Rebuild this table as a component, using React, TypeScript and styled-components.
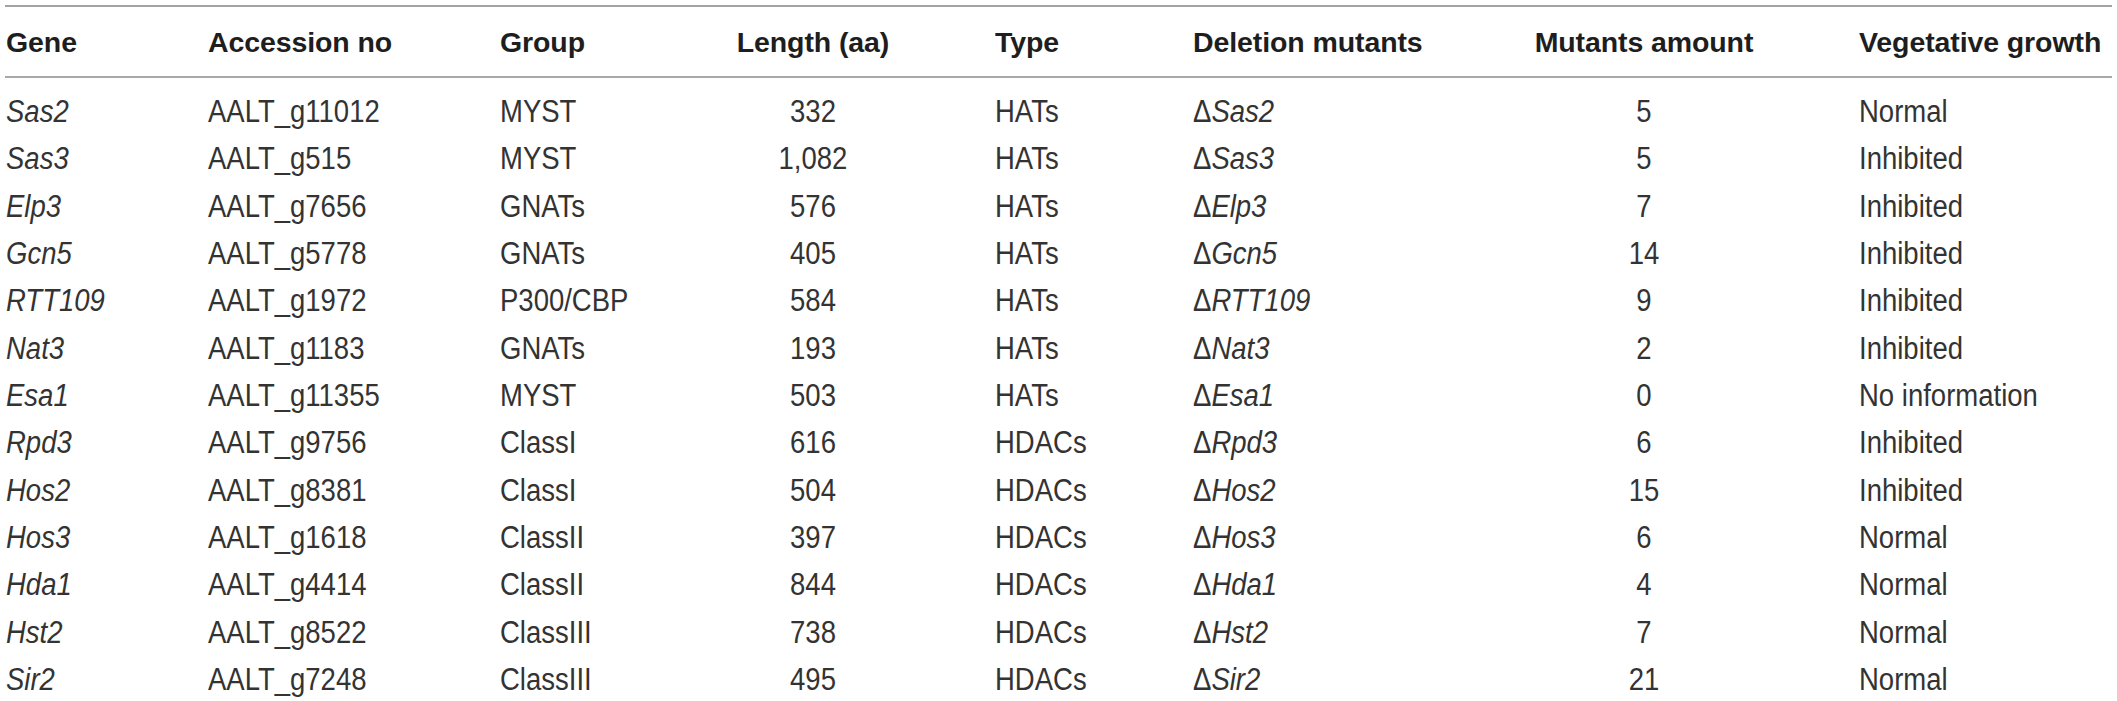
import React from "react";
import styled, { createGlobalStyle } from "styled-components";

const GlobalStyle = createGlobalStyle`
  html, body {
    margin: 0;
    padding: 0;
    background: #ffffff;
  }
  body {
    font-family: "Liberation Sans", Arial, Helvetica, sans-serif;
  }
`;

const Page = styled.div`
  padding: 5px 5px 0 5px;
  background: #ffffff;
`;

const Table = styled.table`
  width: 2107px;
  border-collapse: collapse;
  table-layout: fixed;
  border-top: 2px solid #a3a3a3;
`;

const HeadRow = styled.tr`
  border-bottom: 2px solid #a8a8a8;
`;

type Align = { $center?: boolean };

const HeadCell = styled.th<Align>`
  height: 69px;
  padding: 0 0 0 ${(p) => (p.$center ? "0" : "1px")};
  font-size: 28.5px;
  font-weight: 700;
  line-height: 32px;
  color: #1e1e1e;
  text-align: ${(p) => (p.$center ? "center" : "left")};
  white-space: nowrap;
  vertical-align: middle;
  letter-spacing: -0.1px;
`;

const Row = styled.tr`
  &:first-child td {
    padding-top: 11px;
  }
`;

const Cell = styled.td<Align>`
  padding: 0 0 0 ${(p) => (p.$center ? "0" : "1px")};
  font-size: 27.5px;
  font-weight: 400;
  line-height: 47.33px;
  color: #333333;
  text-align: ${(p) => (p.$center ? "center" : "left")};
  white-space: nowrap;
  vertical-align: top;
`;

const Text = styled.span`
  display: inline-block;
  transform: scaleY(1.12);
  transform-origin: 50% 70%;
`;

const Gene = styled.i`
  font-style: italic;
`;

type Entry = {
  gene: string;
  acc: string;
  group: string;
  length: string;
  type: string;
  amount: string;
  growth: string;
};

const rows: Entry[] = [
  { gene: "Sas2", acc: "AALT_g11012", group: "MYST", length: "332", type: "HATs", amount: "5", growth: "Normal" },
  { gene: "Sas3", acc: "AALT_g515", group: "MYST", length: "1,082", type: "HATs", amount: "5", growth: "Inhibited" },
  { gene: "Elp3", acc: "AALT_g7656", group: "GNATs", length: "576", type: "HATs", amount: "7", growth: "Inhibited" },
  { gene: "Gcn5", acc: "AALT_g5778", group: "GNATs", length: "405", type: "HATs", amount: "14", growth: "Inhibited" },
  { gene: "RTT109", acc: "AALT_g1972", group: "P300/CBP", length: "584", type: "HATs", amount: "9", growth: "Inhibited" },
  { gene: "Nat3", acc: "AALT_g1183", group: "GNATs", length: "193", type: "HATs", amount: "2", growth: "Inhibited" },
  { gene: "Esa1", acc: "AALT_g11355", group: "MYST", length: "503", type: "HATs", amount: "0", growth: "No information" },
  { gene: "Rpd3", acc: "AALT_g9756", group: "ClassI", length: "616", type: "HDACs", amount: "6", growth: "Inhibited" },
  { gene: "Hos2", acc: "AALT_g8381", group: "ClassI", length: "504", type: "HDACs", amount: "15", growth: "Inhibited" },
  { gene: "Hos3", acc: "AALT_g1618", group: "ClassII", length: "397", type: "HDACs", amount: "6", growth: "Normal" },
  { gene: "Hda1", acc: "AALT_g4414", group: "ClassII", length: "844", type: "HDACs", amount: "4", growth: "Normal" },
  { gene: "Hst2", acc: "AALT_g8522", group: "ClassIII", length: "738", type: "HDACs", amount: "7", growth: "Normal" },
  { gene: "Sir2", acc: "AALT_g7248", group: "ClassIII", length: "495", type: "HDACs", amount: "21", growth: "Normal" },
];

const widths = [202, 292, 133, 362, 198, 238, 428, 254];

export default function App() {
  return (
    <Page>
      <GlobalStyle />
      <Table>
        <colgroup>
          {widths.map((w, i) => (
            <col key={i} style={{ width: w }} />
          ))}
        </colgroup>
        <thead>
          <HeadRow>
            <HeadCell>Gene</HeadCell>
            <HeadCell>Accession no</HeadCell>
            <HeadCell>Group</HeadCell>
            <HeadCell $center>Length (aa)</HeadCell>
            <HeadCell>Type</HeadCell>
            <HeadCell>Deletion mutants</HeadCell>
            <HeadCell $center>Mutants amount</HeadCell>
            <HeadCell>Vegetative growth</HeadCell>
          </HeadRow>
        </thead>
        <tbody>
          {rows.map((r) => (
            <Row key={r.gene}>
              <Cell>
                <Text>
                  <Gene>{r.gene}</Gene>
                </Text>
              </Cell>
              <Cell>
                <Text>{r.acc}</Text>
              </Cell>
              <Cell>
                <Text>{r.group}</Text>
              </Cell>
              <Cell $center>
                <Text>{r.length}</Text>
              </Cell>
              <Cell>
                <Text>{r.type}</Text>
              </Cell>
              <Cell>
                <Text>
                  Δ<Gene>{r.gene}</Gene>
                </Text>
              </Cell>
              <Cell $center>
                <Text>{r.amount}</Text>
              </Cell>
              <Cell>
                <Text>{r.growth}</Text>
              </Cell>
            </Row>
          ))}
        </tbody>
      </Table>
    </Page>
  );
}
